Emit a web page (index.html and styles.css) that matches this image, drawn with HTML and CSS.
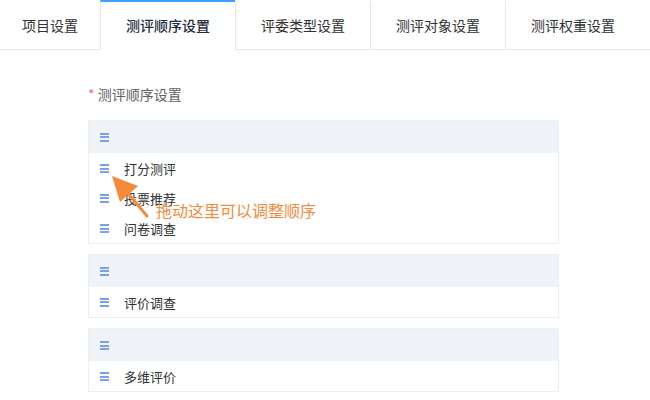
FILE: index.html
```html
<!DOCTYPE html>
<html lang="zh-CN">

<head>
    <meta charset="UTF-8">
    <title>测评顺序设置</title>
    <link rel="stylesheet" href="styles.css">
</head>

<body>

    <div class="tabs">
        <div class="tab first">项目设置</div>
        <div class="tab active">测评顺序设置</div>
        <div class="tab">评委类型设置</div>
        <div class="tab">测评对象设置</div>
        <div class="tab">测评权重设置</div>
    </div>

    <div class="content">
        <div class="label"><span class="required">*</span> 测评顺序设置</div>

        <div class="group">
            <div class="group-head"><span class="handle"></span></div>
            <div class="item"><span class="handle"></span>打分测评</div>
            <div class="item"><span class="handle"></span>投票推荐</div>
            <div class="item"><span class="handle"></span>问卷调查</div>

            <div class="hint">
                <svg class="arrow" width="70" height="70" viewBox="0 0 70 70">
                    <line x1="30" y1="16" x2="57" y2="48" stroke="#f48b3b" stroke-width="3" stroke-linecap="round" />
                    <polygon points="22,8 48,18 30,34" fill="#f48b3b" />
                </svg>
                <span class="hint-text">拖动这里可以调整顺序</span>
            </div>
        </div>

        <div class="group">
            <div class="group-head"><span class="handle"></span></div>
            <div class="item"><span class="handle"></span>评价调查</div>
        </div>

        <div class="group">
            <div class="group-head"><span class="handle"></span></div>
            <div class="item"><span class="handle"></span>多维评价</div>
        </div>
    </div>

</body>

</html>
```

FILE: styles.css
```css
body {
    margin: 0;
    font-family: "Noto Sans CJK SC", "Liberation Sans", sans-serif;
    color: #303133;
    background: #fff;
}

.tabs {
    display: flex;
    height: 50px;
    border-bottom: 1px solid #e4e7ed;
    box-sizing: border-box;
}

.tab {
    width: 135px;
    height: 50px;
    box-sizing: border-box;
    border-left: 1px solid #e4e7ed;
    border-top: 2px solid transparent;
    border-bottom: 1px solid #e4e7ed;
    display: flex;
    align-items: center;
    justify-content: center;
    font-size: 14px;
    color: #303133;
    padding-bottom: 1px;
}

.tab.first {
    width: 100px;
    border-left: none;
}

.tab.active {
    border-top-color: #409eff;
    border-bottom-color: #fff;
    font-weight: 500;
    color: #1f2d3d;
}

.content {
    padding: 34px 0 0 88px;
}

.label {
    font-size: 14px;
    color: #606266;
    line-height: 20px;
    margin-bottom: 16px;
}

.required {
    color: #f56c6c;
}

.group {
    position: relative;
    width: 471px;
    box-sizing: border-box;
    border: 1px solid #ebeef5;
    margin-bottom: 10px;
}

.group-head {
    height: 32px;
    background: #eff3f7;
    display: flex;
    align-items: center;
    padding-left: 11px;
}

.item {
    height: 30px;
    display: flex;
    align-items: center;
    padding-left: 11px;
    font-size: 13px;
    color: #303133;
}

.handle {
    width: 9px;
    height: 9px;
    margin-right: 15px;
    background: linear-gradient(#7aa1e6 0 2px, transparent 2px 3.5px, #7aa1e6 3.5px 5.5px, transparent 5.5px 7px, #7aa1e6 7px 9px);
    flex: none;
}

.hint {
    position: absolute;
    left: 0;
    top: 0;
    pointer-events: none;
}

.arrow {
    position: absolute;
    left: 1px;
    top: 47px;
}

.hint-text {
    position: absolute;
    left: 67px;
    top: 78px;
    white-space: nowrap;
    font-size: 16px;
    line-height: 22px;
    color: #f48b3b;
}
```
